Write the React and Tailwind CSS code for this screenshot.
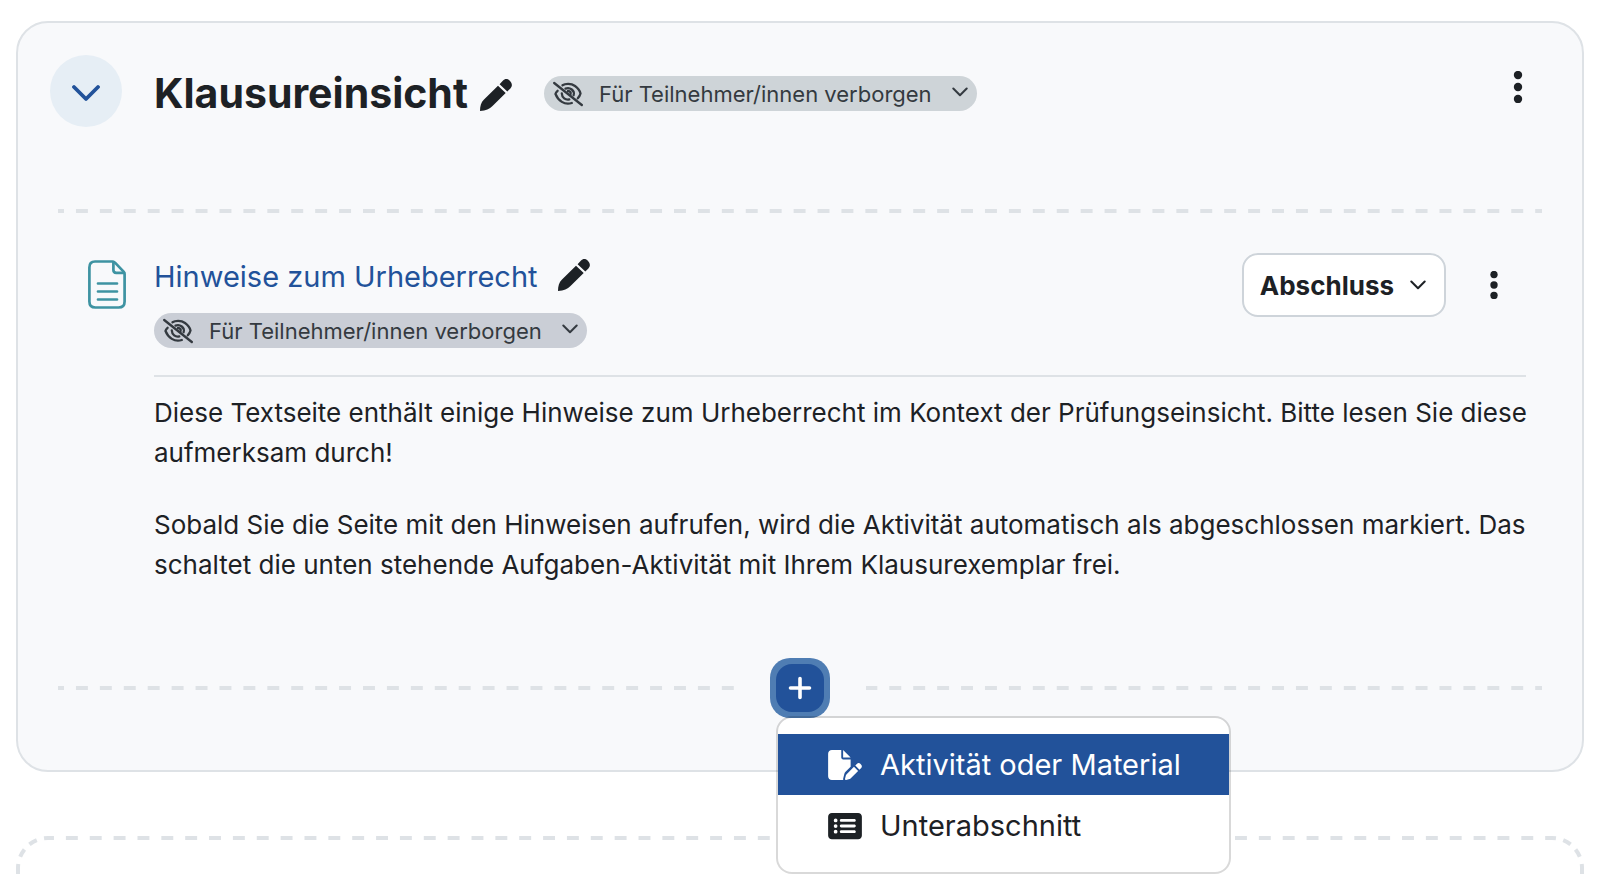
import { useState } from "react";
import { FaFilePen, FaRectangleList } from "react-icons/fa6";

const Chevron = ({ className }) => (
  <svg viewBox="0 0 16 10" className={`w-4 h-[10px] shrink-0 stroke-2 ${className}`} fill="none" stroke="currentColor" strokeLinecap="round" strokeLinejoin="round" aria-hidden="true">
    <path d="M1.3 1.5 L8 8.3 L14.7 1.5" />
  </svg>
);

const Pencil = () => (
  <svg viewBox="0 0 32 32" className="w-8 h-8" fill="currentColor" aria-hidden="true">
    <path d="M0 32 C0 27 1 23.5 4 20.5 L18 6.8 L25.7 14 L12.5 27 C9.5 30 6 31.5 0 32 Z" />
    <path d="M19.6 5.2 L22.8 1.8 C25 -.5 27.8 -.4 30 1.9 C32.3 4.3 32.5 7.3 30.4 9.4 L27.3 12.5 Z" />
  </svg>
);

const EyeSlash = () => (
  <svg viewBox="0 0 30 26" className="w-[30px] h-[26px] shrink-0" fill="none" stroke="currentColor" strokeWidth="2.3" strokeLinecap="round" aria-hidden="true">
    <path d="M1.2 2 L28.8 24" />
    <path d="M9.5 4.3 C12 2.6 18 2 22 5 C25 7.2 27 10 27.5 12.5 C27 14.5 26 16 24.8 17.3" />
    <path d="M4.6 9.8 C3.3 11 2.6 12.2 2.5 13 C5 19.5 11.5 24.5 18.8 22" />
    <path d="M12.5 7.6 C17 5.8 22 9.6 20.6 14.2" />
    <path d="M8.8 12.5 C9 16.8 12.5 19.3 16.3 18.4" />
    <path d="M15 10 C17.3 10.2 18 11.6 17.6 13" />
  </svg>
);

const Dots = ({ className }) => (
  <svg viewBox="0 0 32 32" className={className} fill="currentColor" aria-hidden="true">
    <circle cx="16" cy="4" r="4.2" />
    <circle cx="16" cy="16" r="4.2" />
    <circle cx="16" cy="28" r="4.2" />
  </svg>
);

const PageIcon = () => (
  <svg viewBox="0 0 38 49" className="w-[38px] h-[49px] mt-[7px] shrink-0" fill="none" stroke="#3e93a2" strokeWidth="2.7" strokeLinecap="round" strokeLinejoin="round" aria-hidden="true">
    <path d="M7 1.5 H24.5 Q26 1.5 27 2.6 L35.6 11.6 Q36.6 12.7 36.6 14 V41.5 Q36.6 47.5 30.6 47.5 H7.4 Q1.4 47.5 1.4 41.5 V7.5 Q1.4 1.5 7 1.5 Z" />
    <path d="M25.4 2 V10 Q25.4 12.8 28.2 12.8 H36" />
    <path d="M10 23.5 H29 M10 31.5 H29 M10 39.5 H29" />
  </svg>
);

const BoxCorner = ({ className }) => (
  <svg viewBox="0 0 32 44" className={`w-8 h-11 shrink-0 ${className}`} fill="none" stroke="#dee2e6" strokeWidth="4" strokeDasharray="4 7.5 8.5 7 8.5 7.5 10 50" aria-hidden="true">
    <path d="M32 2 A30 30 0 0 0 2 32 V44" />
  </svg>
);

// starts and ends on half a dash, whatever the width
const Dashes = ({ className }) => (
  <div className={`h-1 bg-[linear-gradient(90deg,#dee2e6_25%,transparent_25%_75%,#dee2e6_75%)] bg-size-[24px_4px] bg-repeat-round ${className}`} />
);

const HiddenBadge = ({ className }) => (
  <button type="button" className={`flex items-center h-[35px] px-[9px] rounded-full text-[#343a40] text-[22px] leading-8 whitespace-nowrap ${className}`}>
    <EyeSlash />
    <span className="ml-4 mr-5">Für Teilnehmer/innen verborgen</span>
    <Chevron className="mb-1" />
  </button>
);

const menuItems = [
  { label: "Aktivität oder Material", icon: FaFilePen, active: true },
  { label: "Unterabschnitt", icon: FaRectangleList, active: false },
];

const App = () => {
  const [open, setOpen] = useState(true);

  return (
    <div className="h-screen overflow-hidden bg-white pl-4 pr-[18px] pt-[21px] font-['Inter',sans-serif] text-[#1d2125]">
      <section className="rounded-[32px] border-2 border-[#dee2e6] bg-[#f8f9fb] px-10 pb-[52px]">
        {/* Section header */}
        <header className="flex items-start pt-8 -ml-2">
          <button type="button" aria-label="Einklappen" className="flex items-center justify-center w-[72px] h-[72px] rounded-full bg-[#e6eef5] text-[#22529a]">
            <svg viewBox="0 0 28 18" className="w-7 h-[18px] mt-1" fill="none" stroke="currentColor" strokeWidth="3.8" strokeLinecap="round" strokeLinejoin="round" aria-hidden="true">
              <path d="M2 3 L14 15 L26 3" />
            </svg>
          </button>
          <h2 className="ml-8 text-[41px] leading-[76px] font-bold">Klausureinsicht</h2>
          <button type="button" aria-label="Titel bearbeiten" className="ml-3 mt-6">
            <Pencil />
          </button>
          <HiddenBadge className="ml-8 mt-[21px] bg-[#ced4d8]" />
          <button type="button" aria-label="Abschnittsmenü" className="ml-auto mt-4 mr-2">
            <Dots className="w-8 h-8" />
          </button>
        </header>
        <Dashes className="mt-[78px]" />

        {/* Activity */}
        <article className="flex items-start pt-10 pl-[30px] pr-4">
          <PageIcon />
          <div className="ml-7 flex-1">
            <div className="flex items-start justify-between">
              <div>
                <div className="flex items-center">
                  <a href="#hinweise" className="text-[29px] leading-[48px] text-[#22529a]">Hinweise zum Urheberrecht</a>
                  <button type="button" aria-label="Titel bearbeiten" className="ml-5 mb-1">
                    <Pencil />
                  </button>
                </div>
                <HiddenBadge className="mt-3 bg-[#caced6]" />
              </div>
              <div className="flex items-center mr-4">
                <button type="button" className="flex items-center h-16 px-4 rounded-2xl border-2 border-[#ced4da] bg-white text-[26px] font-bold">
                  Abschluss
                  <Chevron className="ml-4 mr-0.5" />
                </button>
                <button type="button" aria-label="Aktivitätsmenü" className="flex justify-center w-8 ml-8">
                  <Dots className="w-7 h-7" />
                </button>
              </div>
            </div>
            <div className="mt-[27px] border-t-2 border-[#dee2e6] pt-4 text-[26px] leading-10">
              <div className="-mr-2">
                <p>Diese Textseite enthält einige Hinweise zum Urheberrecht im Kontext der Prüfungseinsicht. Bitte lesen Sie diese aufmerksam durch!</p>
                <p className="mt-8">Sobald Sie die Seite mit den Hinweisen aufrufen, wird die Aktivität automatisch als abgeschlossen markiert. Das schaltet die unten stehende Aufgaben-Aktivität mit Ihrem Klausurexemplar frei.</p>
              </div>
            </div>
          </div>
        </article>

        {/* Add content */}
        <div className="grid items-center mt-[73px]">
          <Dashes className="col-start-1 row-start-1" />
          <div className="col-start-1 row-start-1 justify-self-center px-9 bg-[#f8f9fb]">
            <div className="relative">
              <button
                type="button"
                aria-label="Hinzufügen"
                aria-expanded={open}
                onClick={() => setOpen(!open)}
                className="flex items-center justify-center w-[60px] h-[60px] rounded-[20px] bg-[#4f7db3] text-white"
              >
                <span className="flex items-center justify-center w-12 h-12 rounded-2xl bg-[#22529a]">
                  <svg viewBox="0 0 24 24" className="w-6 h-6" fill="none" stroke="currentColor" strokeWidth="3.6" strokeLinecap="round" aria-hidden="true">
                    <path d="M12 2.5 V21.5 M2.5 12 H21.5" />
                  </svg>
                </span>
              </button>
              {open && (
                <ul className="absolute left-[6px] top-[58px] z-10 w-[455px] py-4 rounded-2xl border-2 border-black/15 bg-white bg-clip-padding">
                  {menuItems.map(({ label, icon: Icon, active }) => (
                    <li key={label}>
                      <button
                        type="button"
                        className={`flex items-center w-full h-[61px] pl-[50px] text-[29px] whitespace-nowrap ${active ? "bg-[#22529a] text-white" : ""}`}
                      >
                        <Icon className="w-[34px] h-[30px] mr-[18px]" />
                        {label}
                      </button>
                    </li>
                  ))}
                </ul>
              )}
            </div>
          </div>
        </div>
      </section>

      {/* Next section placeholder */}
      <div className="flex items-start mt-16">
        <BoxCorner className="" />
        <Dashes className="flex-1" />
        <BoxCorner className="-scale-x-100" />
      </div>
    </div>
  );
};

export default App;
